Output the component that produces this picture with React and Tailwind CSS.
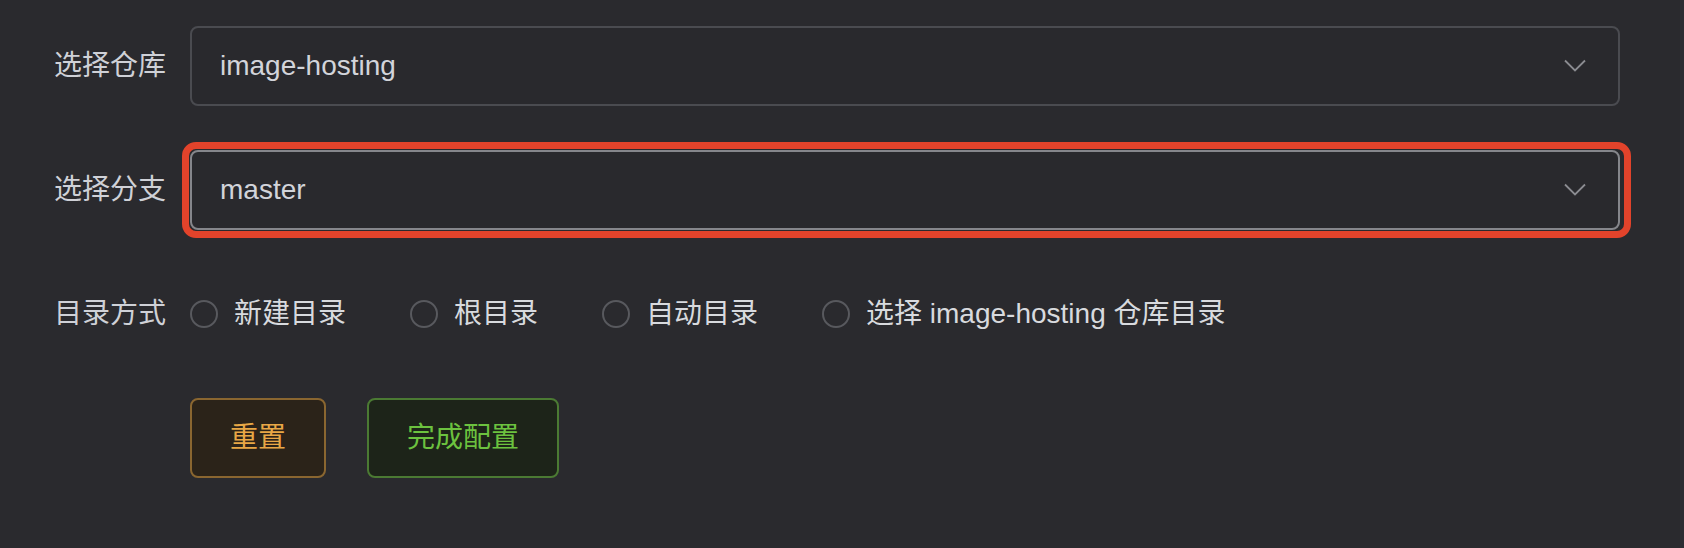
import React, { useState } from 'react';

const font = { fontFamily: '"Liberation Sans", "Noto Sans CJK SC", sans-serif' };

function Chevron() {
    return (
        <svg width="22" height="13" viewBox="0 0 22 13" fill="none" className="shrink-0 -mt-[2px]">
            <path d="M1 1.5 L11 11.5 L21 1.5" stroke="#8b8c91" strokeWidth="1.8" />
        </svg>
    );
}

function SelectBox({ value, active }) {
    return (
        <div
            className={`flex items-center justify-between h-20 w-[1430px] rounded-[8px] border-2 bg-[#29292d] pl-[28px] pr-[32px] ${active ? 'border-[#85868b]' : 'border-[#4a4b50]'}`}
        >
            <span className="text-[28px] text-[#d2d4da] leading-none">{value}</span>
            <Chevron />
        </div>
    );
}

function FormRow({ label, children }) {
    return (
        <div className="flex items-center h-20">
            <div className="w-[190px] shrink-0 pr-6 text-right text-[28px] text-[#cfd1d7] leading-none">
                {label}
            </div>
            {children}
        </div>
    );
}

export default function App() {
    const [mode, setMode] = useState('');
    const options = ['新建目录', '根目录', '自动目录', '选择 image-hosting 仓库目录'];

    return (
        <div className="w-[1684px] h-[548px] bg-[#2a2a2e] flex overflow-hidden" style={font}>
            <div className="flex-1 flex flex-col gap-[44px] pt-[26px]">
                <FormRow label="选择仓库">
                    <SelectBox value="image-hosting" />
                </FormRow>

                <FormRow label="选择分支">
                    <div className="relative">
                        <SelectBox value="master" active />
                        {/* red annotation frame */}
                        <div className="absolute -top-[8px] -left-[8px] -right-[11px] -bottom-[8px] rounded-[14px] border-[7px] border-[#e2432b] pointer-events-none" />
                    </div>
                </FormRow>

                <FormRow label="目录方式">
                    <div className="flex items-center gap-[64px]">
                        {options.map((opt) => (
                            <label key={opt} className="flex items-center gap-[16px] cursor-pointer" onClick={() => setMode(opt)}>
                                <span className={`w-[28px] h-[28px] rounded-full border-2 ${mode === opt ? 'border-[#409eff]' : 'border-[#58595e]'}`} />
                                <span className="text-[28px] text-[#d8dade] leading-none">{opt}</span>
                            </label>
                        ))}
                    </div>
                </FormRow>

                <div className="flex items-center gap-[41px] pl-[190px]">
                    <button className="h-20 px-[38px] rounded-[8px] border-2 border-[#8a6630] bg-[#2b2319] text-[28px] text-[#e8a746] leading-none">
                        重置
                    </button>
                    <button className="h-20 px-[38px] rounded-[8px] border-2 border-[#4b7a33] bg-[#1d2419] text-[28px] text-[#6cc23f] leading-none">
                        完成配置
                    </button>
                </div>
            </div>
            <div className="w-[4px] bg-[#2d2d33]" />
        </div>
    );
}
